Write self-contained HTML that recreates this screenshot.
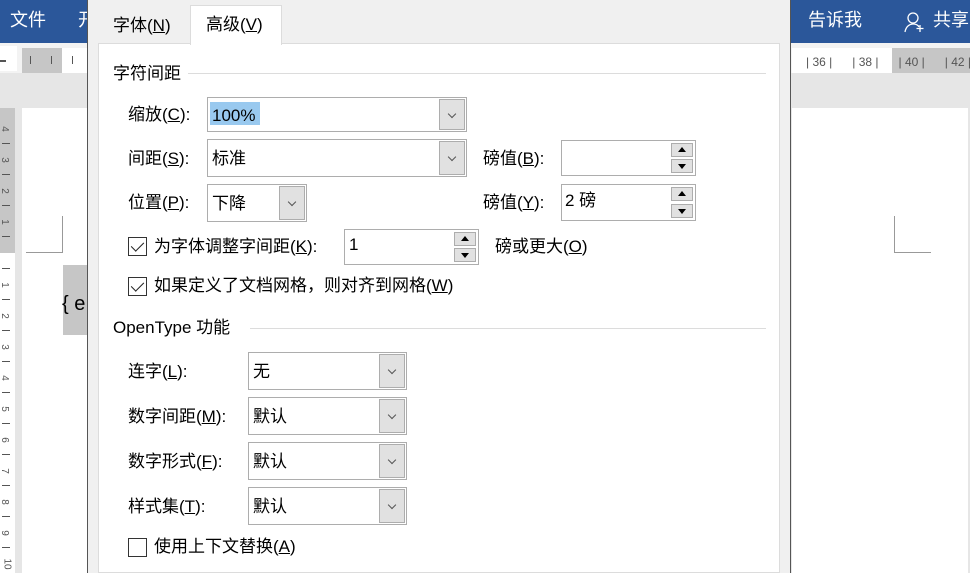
<!DOCTYPE html>
<html><head><meta charset="utf-8"><style>
*{margin:0;padding:0;box-sizing:border-box}
body{width:970px;height:573px;overflow:hidden;position:relative;background:#e6e6e6;font-family:"Liberation Sans","Noto Sans CJK SC","Microsoft YaHei",sans-serif;font-size:17px;color:#000}
.a{position:absolute}
.t{position:absolute;white-space:nowrap;line-height:20px}
.combo{position:absolute;background:#fff;border:1px solid #adadad}
.combo .b{position:absolute;right:1px;top:1px;bottom:1px;width:26px;background:#e1e1e1;border:1px solid #adadad}
.combo .b:after{content:"";position:absolute;left:9px;top:50%;margin-top:-4px;width:5px;height:5px;border-right:1px solid #555;border-bottom:1px solid #555;transform:rotate(45deg)}
.combo .v{position:absolute;left:4px;top:50%;margin-top:-10px;line-height:22px}
.spin{position:absolute;background:#fff;border:1px solid #adadad}
.spin .u,.spin .d{position:absolute;right:2px;width:22px;height:14px;background:#e1e1e1;border:1px solid #adadad}
.spin .u{top:2px}.spin .d{bottom:2px}
.spin .u:after{content:"";position:absolute;left:6px;top:3px;border-left:4px solid transparent;border-right:4px solid transparent;border-bottom:5px solid #000}
.spin .d:after{content:"";position:absolute;left:6px;top:4px;border-left:4px solid transparent;border-right:4px solid transparent;border-top:5px solid #000}
.cb{position:absolute;width:19px;height:19px;border:1px solid #333;background:#fff}
.cb.c:after{content:"";position:absolute;left:5px;top:1px;width:6px;height:11px;border-right:1.5px solid #222;border-bottom:1.5px solid #222;transform:rotate(45deg)}
u{text-decoration:underline}
.grp{position:absolute;height:1px;background:#dcdcdc}
.rn{position:absolute;left:1px;font-size:10px;color:#555;transform:rotate(90deg);line-height:10px}
.rt{position:absolute;left:2px;width:8px;height:1px;background:#555}
</style></head><body>
<div class="a" style="left:0;top:0;width:970px;height:43px;background:#2b579a"></div>
<div class="t" style="left:10px;top:10px;color:#fff;font-size:18px">文件</div>
<div class="t" style="left:78px;top:10px;color:#fff;font-size:18px">开</div>
<div class="t" style="left:808px;top:10px;color:#fff;font-size:18px">告诉我</div>
<svg class="a" style="left:903px;top:10px" width="24" height="24" viewBox="0 0 24 24"><circle cx="10" cy="8" r="5" fill="none" stroke="#fff" stroke-width="1.3"/><path d="M2 22c1-6 5-8 8-8s5 1 6 3" fill="none" stroke="#fff" stroke-width="1.3"/><path d="M17 15v7M13.5 18.5h7" stroke="#fff" stroke-width="1.3"/></svg>
<div class="t" style="left:933px;top:10px;color:#fff;font-size:18px">共享</div>
<div class="a" style="left:0;top:43px;width:970px;height:30px;background:#f3f3f3"></div>
<div class="a" style="left:0;top:46px;width:17px;height:25px;background:#fff"></div>
<div class="a" style="left:0;top:60px;width:6px;height:2px;background:#555"></div>
<div class="a" style="left:22px;top:48px;width:40px;height:25px;background:#c6c6c6"></div>
<div class="a" style="left:62px;top:48px;width:26px;height:25px;background:#fff"></div>
<div class="a" style="left:30px;top:56px;width:1px;height:8px;background:#555"></div>
<div class="a" style="left:51px;top:56px;width:1px;height:8px;background:#555"></div>
<div class="a" style="left:72px;top:56px;width:1px;height:8px;background:#555"></div>
<div class="a" style="left:792px;top:48px;width:100px;height:25px;background:#fff"></div>
<div class="a" style="left:892px;top:48px;width:78px;height:25px;background:#c6c6c6"></div>
<div class="t" style="left:806px;top:52px;font-size:12px;color:#555">| 36 |&nbsp;&nbsp;&nbsp;&nbsp;&nbsp;&nbsp;| 38 |&nbsp;&nbsp;&nbsp;&nbsp;&nbsp;&nbsp;| 40 |&nbsp;&nbsp;&nbsp;&nbsp;&nbsp;&nbsp;| 42 |</div>
<div class="a" style="left:0;top:108px;width:15px;height:145px;background:#c6c6c6"></div>
<div class="a" style="left:0;top:253px;width:15px;height:320px;background:#fff"></div>
<div class="rn" style="top:124px">4</div><div class="rt" style="top:143px"></div>
<div class="rn" style="top:155px">3</div><div class="rt" style="top:174px"></div>
<div class="rn" style="top:186px">2</div><div class="rt" style="top:205px"></div>
<div class="rn" style="top:217px">1</div><div class="rt" style="top:236px"></div>
<div class="rn" style="top:280px">1</div><div class="rt" style="top:268px"></div><div class="rt" style="top:299px"></div>
<div class="rn" style="top:311px">2</div><div class="rt" style="top:330px"></div>
<div class="rn" style="top:342px">3</div><div class="rt" style="top:361px"></div>
<div class="rn" style="top:373px">4</div><div class="rt" style="top:392px"></div>
<div class="rn" style="top:404px">5</div><div class="rt" style="top:423px"></div>
<div class="rn" style="top:435px">6</div><div class="rt" style="top:454px"></div>
<div class="rn" style="top:466px">7</div><div class="rt" style="top:485px"></div>
<div class="rn" style="top:497px">8</div><div class="rt" style="top:516px"></div>
<div class="rn" style="top:528px">9</div><div class="rt" style="top:547px"></div>
<div class="rn" style="top:559px">10</div>
<div class="a" style="left:22px;top:108px;width:66px;height:465px;background:#fff"></div>
<div class="a" style="left:792px;top:108px;width:176px;height:465px;background:#fff"></div>
<div class="a" style="left:62px;top:216px;width:1px;height:36px;background:#999"></div>
<div class="a" style="left:26px;top:252px;width:37px;height:1px;background:#999"></div>
<div class="a" style="left:894px;top:216px;width:1px;height:36px;background:#999"></div>
<div class="a" style="left:894px;top:252px;width:37px;height:1px;background:#999"></div>
<div class="a" style="left:63px;top:265px;width:25px;height:70px;background:#c6c6c6"></div>
<div class="t" style="left:62px;top:294px;font-size:20px">{ e</div>
<div class="a" style="left:87px;top:0;width:704px;height:573px;background:#f0f0f0;border-left:1px solid #555;border-right:1px solid #555"></div>
<div class="a" style="left:98px;top:43px;width:682px;height:530px;background:#fff;border:1px solid #dcdcdc"></div>
<div class="a" style="left:190px;top:5px;width:92px;height:40px;background:#fff;border:1px solid #dcdcdc;border-bottom:none"></div>
<div class="t" style="left:113px;top:16px">字体(<u>N</u>)</div>
<div class="t" style="left:206px;top:15px">高级(<u>V</u>)</div>

<div class="t" style="left:113px;top:64px">字符间距</div>
<div class="grp" style="left:188px;top:73px;width:578px"></div>

<div class="t" style="left:128px;top:105px">缩放(<u>C</u>):</div>
<div class="combo" style="left:207px;top:97px;width:260px;height:35px"><div class="a" style="left:2px;top:4px;width:50px;height:23px;background:#99c9ef"></div><div class="v">100%</div><div class="b"></div></div>

<div class="t" style="left:128px;top:149px">间距(<u>S</u>):</div>
<div class="combo" style="left:207px;top:139px;width:260px;height:38px"><div class="v">标准</div><div class="b"></div></div>

<div class="t" style="left:128px;top:193px">位置(<u>P</u>):</div>
<div class="combo" style="left:207px;top:184px;width:100px;height:38px"><div class="v">下降</div><div class="b"></div></div>

<div class="t" style="left:483px;top:149px">磅值(<u>B</u>):</div>
<div class="spin" style="left:561px;top:140px;width:135px;height:36px"><div class="u"></div><div class="d"></div></div>
<div class="t" style="left:483px;top:193px">磅值(<u>Y</u>):</div>
<div class="spin" style="left:561px;top:184px;width:135px;height:37px"><div class="t" style="left:3px;top:6px">2 磅</div><div class="u"></div><div class="d"></div></div>

<div class="cb c" style="left:128px;top:237px"></div>
<div class="t" style="left:154px;top:237px">为字体调整字间距(<u>K</u>):</div>
<div class="spin" style="left:344px;top:229px;width:135px;height:36px"><div class="t" style="left:4px;top:5px">1</div><div class="u"></div><div class="d"></div></div>
<div class="t" style="left:495px;top:237px">磅或更大(<u>O</u>)</div>

<div class="cb c" style="left:128px;top:277px"></div>
<div class="t" style="left:154px;top:276px">如果定义了文档网格，则对齐到网格(<u>W</u>)</div>

<div class="t" style="left:113px;top:318px">OpenType 功能</div>
<div class="grp" style="left:250px;top:328px;width:516px"></div>

<div class="t" style="left:128px;top:362px">连字(<u>L</u>):</div>
<div class="combo" style="left:248px;top:352px;width:159px;height:38px"><div class="v">无</div><div class="b"></div></div>
<div class="t" style="left:128px;top:407px">数字间距(<u>M</u>):</div>
<div class="combo" style="left:248px;top:397px;width:159px;height:38px"><div class="v">默认</div><div class="b"></div></div>
<div class="t" style="left:128px;top:452px">数字形式(<u>F</u>):</div>
<div class="combo" style="left:248px;top:442px;width:159px;height:38px"><div class="v">默认</div><div class="b"></div></div>
<div class="t" style="left:128px;top:497px">样式集(<u>T</u>):</div>
<div class="combo" style="left:248px;top:487px;width:159px;height:38px"><div class="v">默认</div><div class="b"></div></div>

<div class="cb" style="left:128px;top:538px"></div>
<div class="t" style="left:154px;top:537px">使用上下文替换(<u>A</u>)</div>
</body></html>
